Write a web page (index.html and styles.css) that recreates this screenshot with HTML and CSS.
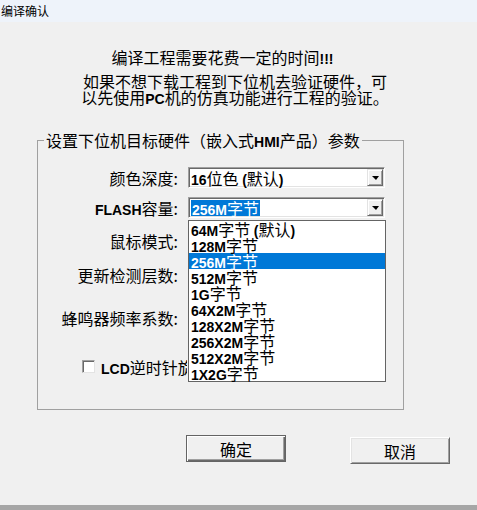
FILE: index.html
```html
<!DOCTYPE html>
<html lang="zh-CN">
<head>
<meta charset="utf-8">
<title>编译确认</title>
<link rel="stylesheet" href="styles.css">
</head>
<body>
<div class="window">
  <div class="titlebar">编译确认</div>
  <div class="msg1">编译工程需要花费一定的时间<b class="lat">!!!</b></div>
  <div class="msg2">如果不想下载工程到下位机去验证硬件，可<br>以先使用<b class="lat">PC</b>机的仿真功能进行工程的验证。</div>
  <fieldset class="group">
    <legend>设置下位机目标硬件（嵌入式<b class="lat">HMI</b>产品）参数</legend>
    <div class="form">
      <div class="row r1">
        <span class="label">颜色深度:</span>
        <div class="combo"><span class="value"><b class="lat">16</b>位色 <b class="lat">(</b>默认<b class="lat">)</b></span><span class="arrow"><i class="tri"></i></span></div>
      </div>
      <div class="row r2">
        <span class="label"><b class="lat">FLASH</b>容量:</span>
        <div class="combo">
          <span class="value"><span class="sel"><b class="lat">256M</b>字节</span></span><span class="arrow"><i class="tri"></i></span>
          <ul class="list">
            <li><b class="lat">64M</b>字节 <b class="lat">(</b>默认<b class="lat">)</b></li>
            <li><b class="lat">128M</b>字节</li>
            <li class="active"><b class="lat">256M</b>字节</li>
            <li><b class="lat">512M</b>字节</li>
            <li><b class="lat">1G</b>字节</li>
            <li><b class="lat">64X2M</b>字节</li>
            <li><b class="lat">128X2M</b>字节</li>
            <li><b class="lat">256X2M</b>字节</li>
            <li><b class="lat">512X2M</b>字节</li>
            <li><b class="lat">1X2G</b>字节</li>
          </ul>
        </div>
      </div>
      <div class="row r3">
        <span class="label">鼠标模式:</span>
        <div class="combo"><span class="value"></span><span class="arrow"><i class="tri"></i></span></div>
      </div>
      <div class="row r4">
        <span class="label">更新检测层数:</span>
        <div class="combo"><span class="value"></span><span class="arrow"><i class="tri"></i></span></div>
      </div>
      <div class="row r5">
        <span class="label">蜂鸣器频率系数:</span>
        <div class="combo"><span class="value"></span><span class="arrow"><i class="tri"></i></span></div>
      </div>
      <label class="check"><span class="box"></span><span class="check-text"><b class="lat">LCD</b>逆时针旋转<b class="lat">180</b>度</span></label>
    </div>
  </fieldset>
  <div class="buttons">
    <button class="btn default">确定</button>
    <button class="btn cancel">取消</button>
  </div>
  <div class="edge"></div>
</div>
</body>
</html>
```
FILE: styles.css
```css
html, body {
  margin: 0;
  padding: 0;
}
body {
  background: #f0f0f0;
  color: #000;
  font-family: "Noto Sans CJK SC", "Liberation Sans", sans-serif;
  font-size: 16px;
}
.window {
  width: 477px;
  height: 510px;
  display: flex;
  flex-direction: column;
  overflow: hidden;
}
.titlebar {
  height: 22px;
  line-height: 21px;
  font-size: 12px;
  padding-left: 1px;
  background: #eef3fa;
  flex: none;
}
.lat {
  font-family: "Liberation Sans", Arial, sans-serif;
  font-weight: bold;
  font-size: 14px;
  line-height: 10px;
}
.msg1 {
  margin-top: 27px;
  height: 16px;
  line-height: 16px;
  text-align: center;
  padding-right: 32px;
  flex: none;
}
.msg2 {
  margin-top: 8px;
  height: 32px;
  line-height: 16px;
  text-align: center;
  padding-right: 7px;
  flex: none;
}
.group {
  margin: 27px 0 0 37px;
  padding: 0;
  width: 367px;
  height: 278px;
  box-sizing: border-box;
  border: 1px solid #a0a0a0;
  min-inline-size: 0;
  flex: none;
}
.group legend {
  margin-left: 6px;
  padding: 0 2px;
  height: 16px;
  line-height: 16px;
}
.form {
  padding-top: 19px;
  display: flex;
  flex-direction: column;
}
.row {
  display: grid;
  grid-template-columns: 142px 197px;
  column-gap: 8px;
  height: 21px;
  align-items: center;
}
.r2 { margin-top: 9px; }
.r3 { margin-top: 12px; }
.r4 { margin-top: 13px; }
.r5 { margin-top: 22px; }
.label {
  text-align: right;
  line-height: 18px;
  white-space: nowrap;
  padding-right: 2px;
}
.combo {
  position: relative;
  height: 21px;
  box-sizing: border-box;
  border: 1px solid;
  border-color: #a0a0a0 #ffffff #ffffff #a0a0a0;
  box-shadow: inset 1px 1px #696969, inset -1px -1px #e3e3e3;
  background: #fff;
  display: flex;
  align-items: center;
}
.value {
  flex: 1;
  padding-left: 2px;
  line-height: 16px;
  white-space: nowrap;
}
.sel {
  background: #0078d7;
  color: #fff;
  display: inline-block;
  padding: 0 1px;
  height: 16px;
  line-height: 16px;
  vertical-align: top;
}
.arrow {
  width: 16px;
  height: 17px;
  margin: 1px 1px 1px 0;
  box-sizing: border-box;
  background: #f0f0f0;
  border: 1px solid;
  border-color: #e3e3e3 #696969 #696969 #e3e3e3;
  box-shadow: inset 1px 1px #fff, inset -1px -1px #a0a0a0;
  display: flex;
  align-items: center;
  justify-content: center;
}
.tri {
  width: 0;
  height: 0;
  border-top: 4px solid #000;
  border-left: 4px solid transparent;
  border-right: 3px solid transparent;
  margin-top: 1px;
}
.list {
  position: absolute;
  z-index: 10;
  top: 22px;
  left: -1px;
  width: 198px;
  margin: 0;
  padding: 0;
  list-style: none;
  background: #fff;
  border: 1px solid #646464;
  box-sizing: border-box;
}
.list li {
  height: 16px;
  line-height: 16px;
  padding-left: 2px;
  white-space: nowrap;
}
.list li.active {
  background: #0078d7;
  color: #fff;
}
.check {
  margin-top: 28px;
  height: 21px;
  display: flex;
  align-items: center;
  gap: 6px;
  padding-left: 44px;
  white-space: nowrap;
  line-height: 18px;
}
.box {
  width: 13px;
  height: 13px;
  box-sizing: border-box;
  background: #fff;
  border: 1px solid;
  border-color: #a0a0a0 #e3e3e3 #e3e3e3 #a0a0a0;
  box-shadow: inset 1px 1px #696969;
  flex: none;
}
.check-text {
  width: 86px;
  overflow: hidden;
}
.buttons {
  display: flex;
  align-items: flex-start;
  gap: 64px;
  margin-top: 25px;
  padding-left: 186px;
  flex: none;
}
.btn {
  width: 100px;
  height: 27px;
  box-sizing: border-box;
  background: #f0f0f0;
  font: inherit;
  color: #000;
  padding: 0;
  line-height: 20px;
  display: flex;
  align-items: center;
  justify-content: center;
}
.btn.default {
  border: 1px solid #646464;
  box-shadow: inset 1px 1px #fff, inset -1px -1px #696969, inset -2px -2px #a0a0a0;
}
.btn.cancel {
  margin-top: 2px;
  border: 1px solid;
  border-color: #fff #696969 #696969 #fff;
  box-shadow: inset 1px 1px #e3e3e3, inset -1px -1px #a0a0a0;
}
.edge {
  margin-top: auto;
  height: 5px;
  background: #a6a6a6;
  flex: none;
}
```
